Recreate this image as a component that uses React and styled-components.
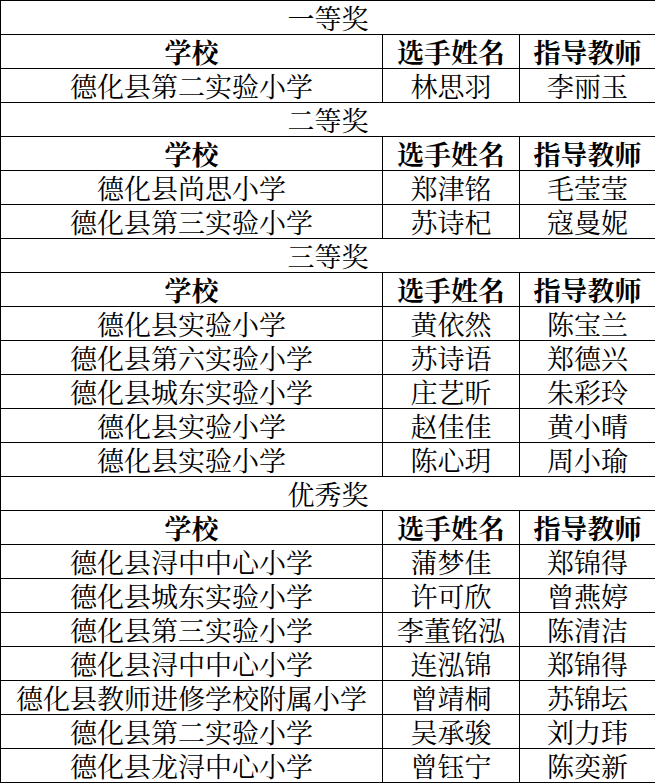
import React from "react";
import styled, { createGlobalStyle } from "styled-components";

const Global = createGlobalStyle`
  html, body { margin: 0; padding: 0; background: #fff; }
  body { font-family: "Noto Serif CJK SC", "Noto Sans CJK SC", serif; }
`;

const Table = styled.table`
  width: 655px;
  border-collapse: collapse;
  table-layout: fixed;
  color: #000;
  font-size: 27px;
`;

const Cell = styled.td`
  border: 1px solid #000;
  height: 33px;
  padding: 0;
  line-height: 28px;
  vertical-align: middle;
  text-align: center;
  white-space: nowrap;
  font-weight: ${(p) => (p.$bold ? 700 : 400)};
`;

const data = [
  {
    title: "一等奖",
    rows: [["德化县第二实验小学", "林思羽", "李丽玉"]],
  },
  {
    title: "二等奖",
    rows: [
      ["德化县尚思小学", "郑津铭", "毛莹莹"],
      ["德化县第三实验小学", "苏诗杞", "寇曼妮"],
    ],
  },
  {
    title: "三等奖",
    rows: [
      ["德化县实验小学", "黄依然", "陈宝兰"],
      ["德化县第六实验小学", "苏诗语", "郑德兴"],
      ["德化县城东实验小学", "庄艺昕", "朱彩玲"],
      ["德化县实验小学", "赵佳佳", "黄小晴"],
      ["德化县实验小学", "陈心玥", "周小瑜"],
    ],
  },
  {
    title: "优秀奖",
    rows: [
      ["德化县浔中中心小学", "蒲梦佳", "郑锦得"],
      ["德化县城东实验小学", "许可欣", "曾燕婷"],
      ["德化县第三实验小学", "李董铭泓", "陈清洁"],
      ["德化县浔中中心小学", "连泓锦", "郑锦得"],
      ["德化县教师进修学校附属小学", "曾靖桐", "苏锦坛"],
      ["德化县第二实验小学", "吴承骏", "刘力玮"],
      ["德化县龙浔中心小学", "曾钰宁", "陈奕新"],
    ],
  },
];

export default function App() {
  return (
    <>
      <Global />
      <Table>
        <colgroup>
          <col style={{ width: 382 }} />
          <col style={{ width: 137 }} />
          <col style={{ width: 136 }} />
        </colgroup>
        <tbody>
          {data.map((g) => (
            <React.Fragment key={g.title}>
              <tr>
                <Cell colSpan={3}>{g.title}</Cell>
              </tr>
              <tr>
                <Cell $bold>学校</Cell>
                <Cell $bold>选手姓名</Cell>
                <Cell $bold>指导教师</Cell>
              </tr>
              {g.rows.map((r, i) => (
                <tr key={i}>
                  {r.map((c, j) => (
                    <Cell key={j}>{c}</Cell>
                  ))}
                </tr>
              ))}
            </React.Fragment>
          ))}
        </tbody>
      </Table>
    </>
  );
}
